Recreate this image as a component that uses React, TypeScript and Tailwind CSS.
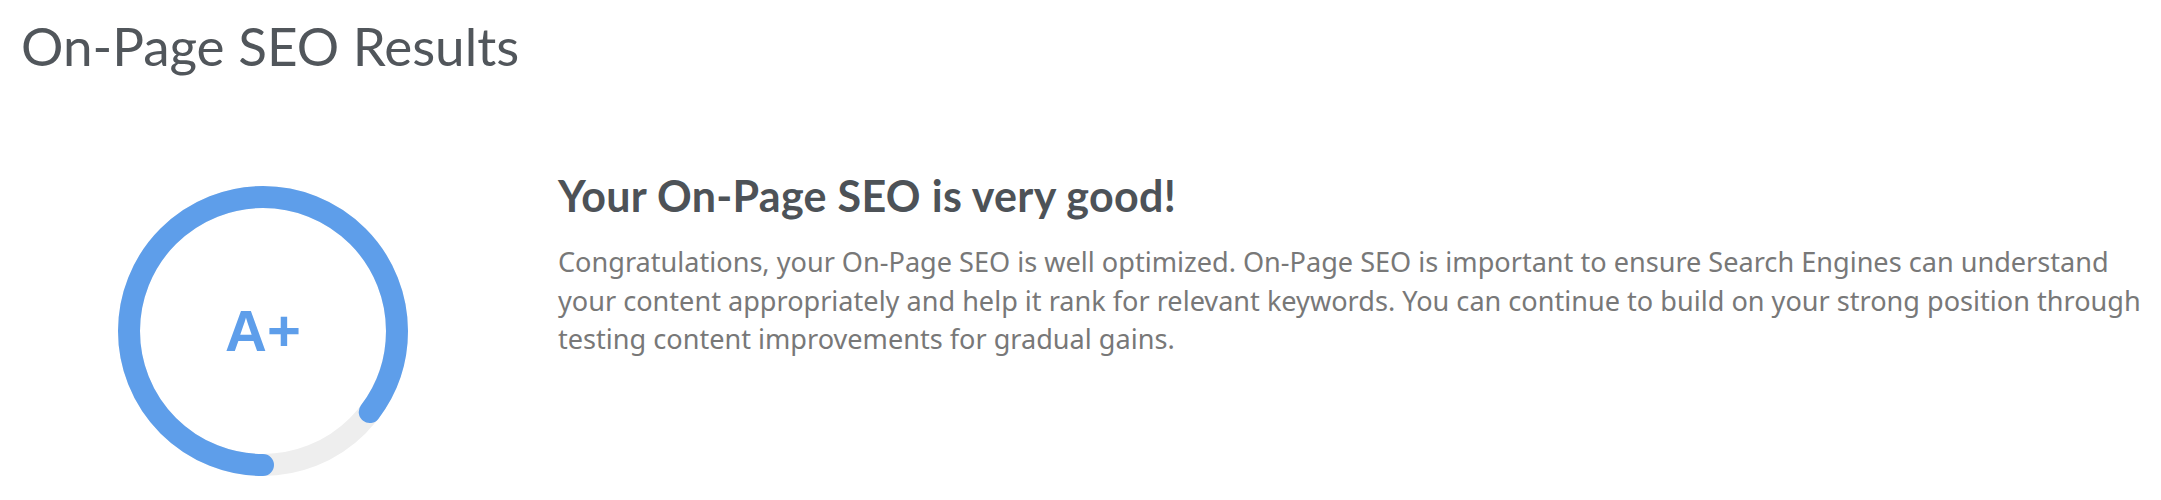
import React from "react";

function GradeRing() {
  const r = 134;
  const c = 2 * Math.PI * r;
  const frac = 0.853;
  return (
    <div className="relative w-[290px] h-[290px]">
      <svg width="290" height="290" viewBox="0 0 290 290">
        <circle cx="145" cy="145" r={r} fill="none" stroke="#eeeeee" strokeWidth="22" />
        <circle
          cx="145"
          cy="145"
          r={r}
          fill="none"
          stroke="#5e9eea"
          strokeWidth="22"
          strokeLinecap="round"
          strokeDasharray={`${c * frac} ${c}`}
          transform="rotate(90 145 145)"
        />
      </svg>
      <div className="absolute inset-0 flex items-center justify-center">
        <span className="font-['Liberation_Sans',Arial,sans-serif] font-bold text-[58px] leading-none text-[#5e9eea]">
          A+
        </span>
      </div>
    </div>
  );
}

export default function App() {
  return (
    <div className="w-[2161px] h-[500px] bg-white overflow-hidden">
      <h1 className="pl-[21px] pt-[19px] font-['Lato',sans-serif] font-normal text-[53px] leading-none text-[#51565b]">
        On-Page SEO Results
      </h1>
      <div className="flex items-start mt-[102px]">
        <div className="w-[558px] shrink-0 pl-[118px] pt-[12px]">
          <GradeRing />
        </div>
        <div className="flex-1 pr-[9px]">
          <h2 className="font-['Lato',sans-serif] font-bold text-[43px] tracking-[0.3px] leading-none text-[#4d5257]">
            Your On-Page SEO is very good!
          </h2>
          <p className="mt-[26px] font-['Noto_Sans',sans-serif] text-[27.1px] leading-[38.5px] text-[#787878]">
            Congratulations, your On-Page SEO is well optimized. On-Page SEO is important to ensure Search Engines can understand your content appropriately and help it rank for relevant keywords. You can continue to build on your strong position through testing content improvements for gradual gains.
          </p>
        </div>
      </div>
    </div>
  );
}
